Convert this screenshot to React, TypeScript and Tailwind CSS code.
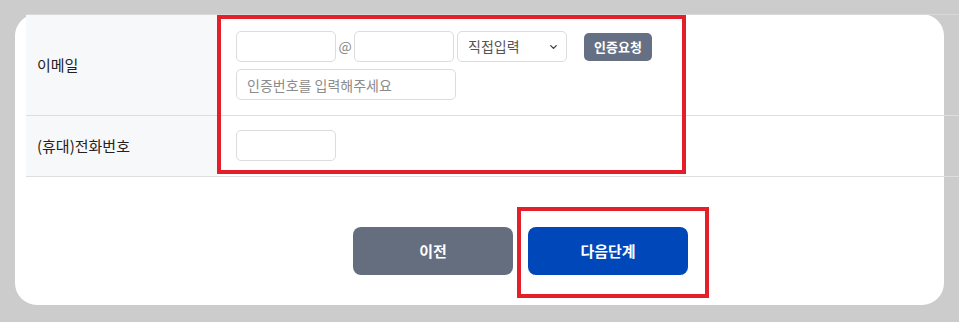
import React from 'react';
import { ChevronDown } from 'lucide-react';

const inputBase =
  'h-[31px] border border-[#dcdcdc] rounded-[5px] bg-white px-[10px] text-[14px] text-[#333] outline-none placeholder:text-[#8c8c8c]';

const App: React.FC = () => {
  return (
    <div className="relative w-[959px] h-[322px] overflow-hidden bg-[#cccccc] pt-[15px] pl-[15px] font-['Noto_Sans_CJK_KR','Noto_Sans',sans-serif]">
      <div className="relative w-[929px] h-[291px] bg-white rounded-[22px]">
        {/* 회원정보 입력 표 */}
        <div className="ml-[11px] -mt-px w-[933px] border-t border-[#d9d9d9]">
          <div className="flex border-b border-[#dedede]">
            <div className="w-[191px] shrink-0 bg-[#f7f8fa] flex items-center pl-[11px] text-[15px] text-[#222]">이메일</div>
            <div className="pl-[19px] pt-[16px] pb-[15px]">
              <div className="flex items-center">
                <input className={`${inputBase} w-[100px]`} />
                <span className="w-[18px] text-center text-[14px] text-[#888]">@</span>
                <input className={`${inputBase} w-[100px]`} />
                <div className="relative ml-[3px]">
                  <select className={`${inputBase} w-[110px] appearance-none text-[#555]`} defaultValue="direct">
                    <option value="direct">직접입력</option>
                  </select>
                  <ChevronDown className="absolute right-[8px] top-1/2 -translate-y-1/2 w-[11px] h-[11px] text-[#444] pointer-events-none" strokeWidth={3} />
                </div>
                <button className="ml-[17px] h-[28px] w-[68px] rounded-[5px] bg-[#667085] text-white text-[13px] font-bold">
                  인증요청
                </button>
              </div>
              <input className={`${inputBase} w-[220px] mt-[7px] block`} placeholder="인증번호를 입력해주세요" />
            </div>
          </div>
          <div className="flex border-b border-[#dedede]">
            <div className="w-[191px] shrink-0 bg-[#f7f8fa] flex items-center pl-[11px] text-[15px] text-[#222]">(휴대)전화번호</div>
            <div className="pl-[19px] pt-[14px] pb-[15px]">
              <input className={`${inputBase} w-[100px] block`} />
            </div>
          </div>
        </div>

        {/* 하단 버튼 */}
        <div className="mt-[50px] pl-[338px] flex gap-[15px]">
          <button className="w-[160px] h-[48px] rounded-[8px] bg-[#646e7f] text-white text-[15px] font-bold">이전</button>
          <button className="w-[160px] h-[48px] rounded-[8px] bg-[#0047ba] text-white text-[15px] font-bold">다음단계</button>
        </div>
      </div>

      {/* 강조 표시 */}
      <div className="absolute left-[217px] top-[15px] w-[469px] h-[159px] border-[4px] border-[#e3202a] pointer-events-none" />
      <div className="absolute left-[517px] top-[207px] w-[192px] h-[91px] border-[4px] border-[#e3202a] pointer-events-none" />
    </div>
  );
};

export default App;
